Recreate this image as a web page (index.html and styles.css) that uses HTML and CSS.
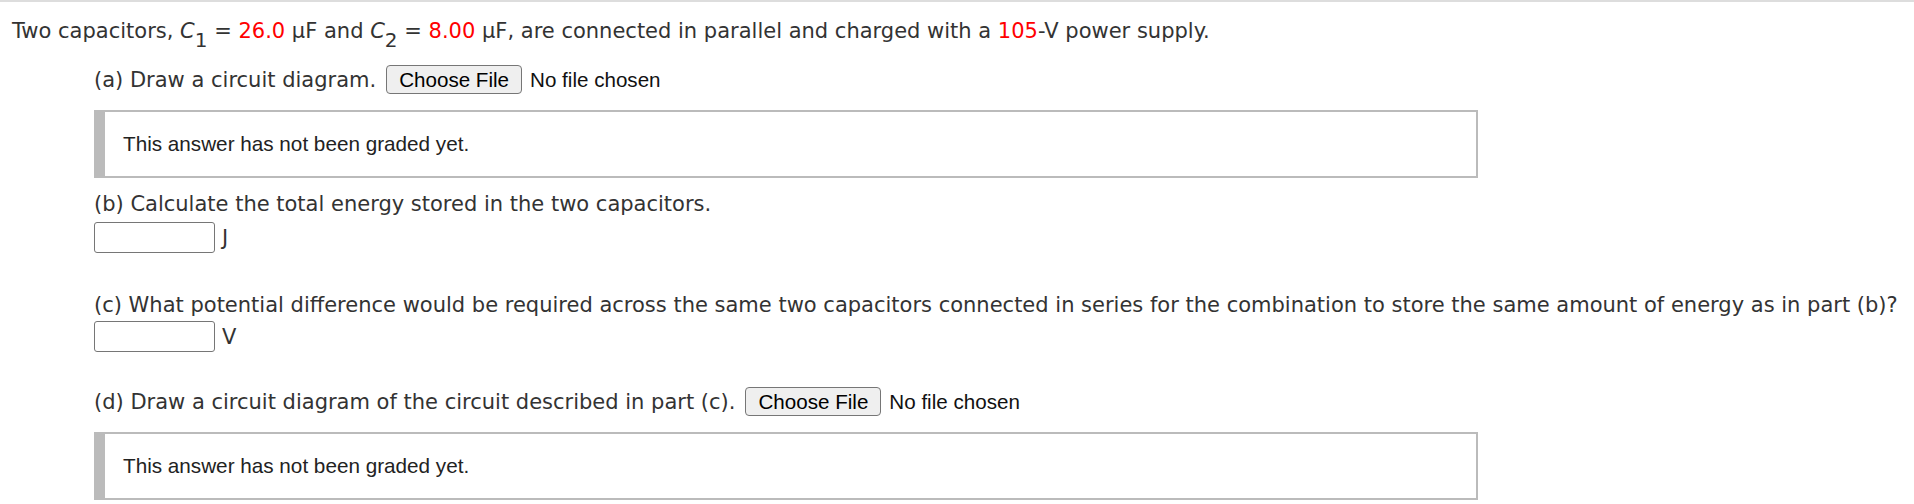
FILE: index.html
```html
<!DOCTYPE html>
<html>
<head>
<meta charset="utf-8">
<link rel="stylesheet" href="styles.css">
</head>
<body>
<div class="page">
  <p class="intro">Two capacitors, <span class="var">C</span><sub>1</sub> = <span class="red">26.0</span> µF and <span class="var">C</span><sub>2</sub> = <span class="red">8.00</span> µF, are connected in parallel and charged with a <span class="red">105</span>-V power supply.</p>
  <div class="parts">
    <div class="row file-row first">
      <span class="q">(a) Draw a circuit diagram.</span>
      <span class="file"><button class="file-btn" type="button">Choose File</button><span class="file-name">No file chosen</span></span>
    </div>
    <div class="graded">This answer has not been graded yet.</div>

    <p class="q block b">(b) Calculate the total energy stored in the two capacitors.</p>
    <div class="row answer"><span class="box"></span><span class="unit">J</span></div>

    <p class="q block c">(c) What potential difference would be required across the same two capacitors connected in series for the combination to store the same amount of energy as in part (b)?</p>
    <div class="row answer after-c"><span class="box"></span><span class="unit">V</span></div>

    <div class="row file-row d">
      <span class="q">(d) Draw a circuit diagram of the circuit described in part (c).</span>
      <span class="file"><button class="file-btn" type="button">Choose File</button><span class="file-name">No file chosen</span></span>
    </div>
    <div class="graded">This answer has not been graded yet.</div>
  </div>
</div>
</body>
</html>
```
FILE: styles.css
```css
html, body {
  margin: 0;
  padding: 0;
  background: #fff;
}
.page {
  border-top: 2px solid #dddddd;
  font-family: "DejaVu Sans", Verdana, sans-serif;
  font-size: 21px;
  color: #333;
}
.intro {
  margin: 17px 0 0 12px;
  line-height: 24px;
  white-space: nowrap;
}
.var {
  font-style: italic;
}
sub {
  font-size: 20px;
  vertical-align: -9px;
  line-height: 0;
}
.red {
  color: #f00;
}
.parts {
  margin-left: 94px;
  width: 1384px;
}
.row {
  display: flex;
  align-items: center;
}
.q {
  line-height: 24px;
  white-space: nowrap;
}
.file-row {
  height: 29px;
}
.file-row.first {
  margin-top: 22px;
}
.file {
  display: flex;
  align-items: center;
  margin-left: 10px;
  font-family: "Liberation Sans", Arial, sans-serif;
  font-size: 20.6px;
  color: #111;
}
.file-btn {
  font-family: "Liberation Sans", Arial, sans-serif;
  font-size: 20.6px;
  color: #000;
  background: #efefef;
  border: 1px solid #767676;
  border-radius: 4px;
  height: 29px;
  padding: 0 12px;
  margin: 0;
  line-height: 27px;
}
.file-name {
  margin-left: 8px;
}
.graded {
  margin-top: 16px;
  height: 64px;
  border: 2px solid #bbbbbb;
  border-left-width: 11px;
  display: flex;
  align-items: center;
  padding-left: 18px;
  font-family: "Liberation Sans", Arial, sans-serif;
  font-size: 20.7px;
  color: #222;
}
.block {
  margin: 0;
}
.b {
  margin-top: 14px;
}
.c {
  margin-top: 40px;
}
.answer {
  margin-top: 6px;
}
.answer.after-c {
  margin-top: 4px;
}
.box {
  display: block;
  width: 119px;
  height: 29px;
  border: 1px solid #767676;
  border-radius: 3px;
  background: #fff;
}
.unit {
  margin-left: 7px;
  line-height: 24px;
}
.file-row.d {
  margin-top: 35px;
}
```
